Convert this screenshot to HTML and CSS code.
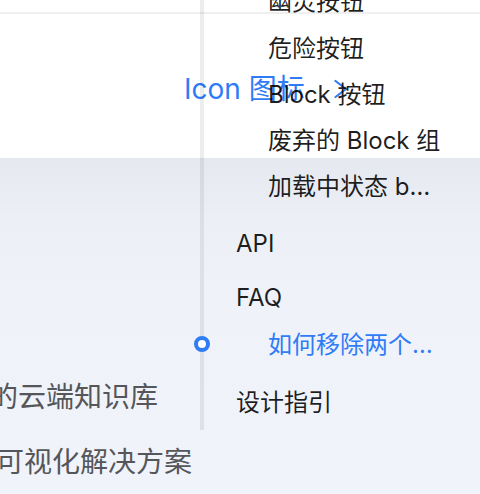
FILE: index.html
```html
<!DOCTYPE html>
<html lang="zh-CN">
<head>
<meta charset="utf-8">
<title>Button 按钮</title>
<link rel="stylesheet" href="styles.css">
</head>
<body>
<div class="page">
  <main class="content">
    <div class="divider"></div>
    <nav class="pager">
      <a class="pager-next" href="#"><span class="pager-text">Icon 图标</span><svg class="pager-icon" viewBox="0 0 14 20" width="14" height="20" aria-hidden="true"><polyline points="1.5,2 12,10 1.5,18" fill="none" stroke="currentColor" stroke-width="2.2" stroke-linecap="round" stroke-linejoin="round"/></svg></a>
    </nav>
  </main>
  <footer class="footer">
    <ul class="footer-list">
      <li class="footer-item footer-item-yuque">的云端知识库</li>
      <li class="footer-item footer-item-antv">可视化解决方案</li>
    </ul>
  </footer>
  <aside class="toc">
    <div class="toc-rail"><span class="toc-ball"></span></div>
    <ul class="toc-list">
      <li class="toc-link toc-link-group">
        <ul class="toc-sub">
          <li class="toc-link"><a class="toc-title" href="#">幽灵按钮</a></li>
          <li class="toc-link"><a class="toc-title" href="#">危险按钮</a></li>
          <li class="toc-link"><a class="toc-title" href="#">Block 按钮</a></li>
          <li class="toc-link"><a class="toc-title" href="#">废弃的 Block 组</a></li>
          <li class="toc-link"><a class="toc-title" href="#">加载中状态 b…</a></li>
        </ul>
      </li>
      <li class="toc-link"><a class="toc-title" href="#">API</a></li>
      <li class="toc-link">
        <a class="toc-title toc-title-parent" href="#">FAQ</a>
        <ul class="toc-sub">
          <li class="toc-link"><a class="toc-title toc-title-active" href="#">如何移除两个…</a></li>
        </ul>
      </li>
      <li class="toc-link"><a class="toc-title" href="#">设计指引</a></li>
    </ul>
  </aside>
</div>
</body>
</html>
```

FILE: styles.css
```css
html, body {
  margin: 0;
  padding: 0;
}

body {
  width: 480px;
  height: 494px;
  overflow: hidden;
  font-family: "Inter", "Noto Sans CJK SC", sans-serif;
  background: #ffffff;
}

ul {
  margin: 0;
  padding: 0;
  list-style: none;
}

a {
  text-decoration: none;
}

.page {
  position: relative;
  width: 480px;
  height: 494px;
  display: flex;
  flex-direction: column;
  overflow: hidden;
}

/* main content */
.content {
  height: 158px;
  flex: none;
  background: #ffffff;
  padding-top: 12px;
  box-sizing: border-box;
}

.divider {
  height: 2px;
  background: #efefef;
}

.pager {
  display: flex;
  margin-top: 55px;
  padding-left: 184px;
}

.pager-next {
  display: flex;
  align-items: center;
  font-size: 28px;
  line-height: 40px;
  color: #2f7cf6;
  white-space: nowrap;
}

.pager-text {
  flex: none;
}

.pager-icon {
  display: block;
  flex: none;
  margin-left: 29px;
  margin-top: -1px;
}

/* footer */
.footer {
  flex: 1;
  background: linear-gradient(180deg, #e5e8ef 0px, #ecf0f6 60px, #eff2f9 140px, #f0f3fa 100%);
  padding-top: 219px;
  box-sizing: border-box;
}

.footer-list {
  display: flex;
  flex-direction: column;
  gap: 25px;
}

.footer-item {
  font-size: 28px;
  line-height: 40px;
  color: #555659;
  white-space: nowrap;
}

.footer-item-yuque {
  margin-left: -10px;
}

.footer-item-antv {
  margin-left: -4px;
}

/* table of contents */
.toc {
  position: absolute;
  left: 200px;
  top: -21px;
  width: 280px;
  padding-left: 4px;
  box-sizing: border-box;
}

.toc-rail {
  position: absolute;
  left: 0;
  top: 0;
  bottom: 0;
  width: 4px;
  background: rgba(0, 0, 0, 0.07);
}

.toc-ball {
  position: absolute;
  left: -6px;
  top: 357px;
  width: 16px;
  height: 16px;
  box-sizing: border-box;
  border: 4px solid #2f7cf6;
  border-radius: 50%;
  background: #ffffff;
}

.toc-link {
  padding: 8px 0 8px 32px;
}

.toc-link-group {
  padding-top: 0;
  padding-bottom: 7px;
}

.toc-sub .toc-link {
  padding-top: 4.3px;
  padding-bottom: 4.3px;
}

.toc-title {
  display: block;
  font-size: 24px;
  line-height: 37.7px;
  color: rgba(0, 0, 0, 0.88);
  white-space: nowrap;
  overflow: hidden;
}

.toc-title-parent {
  margin-bottom: 5px;
}

.toc-title-active {
  color: #2f7cf6;
}
```
